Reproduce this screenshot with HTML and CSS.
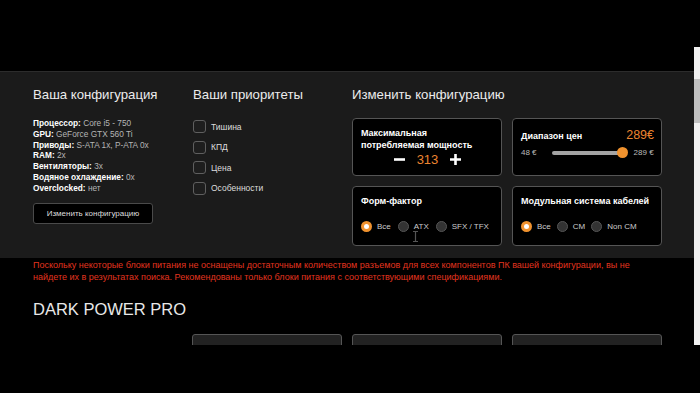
FILE: index.html
```html
<!DOCTYPE html>
<html lang="ru">
<head>
  <meta charset="UTF-8">
  <title>Блоки питания</title>
  <link rel="stylesheet" href="styles.css">
</head>
<body>
<div class="screen">
  <div class="letterbox-top"></div>

  <div class="viewport">
    <div class="page">
      <div class="site-header"></div>

      <section class="config-panel">
        <div class="col">
          <h2>Ваша конфигурация</h2>
          <ul class="spec-list">
            <li><b>Процессор:</b> Core i5 - 750</li>
            <li><b>GPU:</b> GeForce GTX 560 Ti</li>
            <li><b>Приводы:</b> S-ATA 1x, P-ATA 0x</li>
            <li><b>RAM:</b> 2x</li>
            <li><b>Вентиляторы:</b> 3x</li>
            <li><b>Водяное охлаждение:</b> 0x</li>
            <li><b>Overclocked:</b> нет</li>
          </ul>
          <button class="btn-change">Изменить конфигурацию</button>
        </div>

        <div class="col">
          <h2>Ваши приоритеты</h2>
          <ul class="check-list">
            <li><span class="check"></span>Тишина</li>
            <li><span class="check"></span>КПД</li>
            <li><span class="check"></span>Цена</li>
            <li><span class="check"></span>Особенности</li>
          </ul>
        </div>

        <div class="col">
          <h2>Изменить конфигурацию</h2>
          <div class="filter-grid">
            <div class="filter-card">
              <div class="filter-title">Максимальная<br>потребляемая мощность</div>
              <div class="stepper">
                <svg class="step-btn" width="11" height="11" viewBox="0 0 11 11"><path d="M0 5.5H11" stroke="#fff" stroke-width="2.6"/></svg>
                <span class="step-value">313</span>
                <svg class="step-btn" width="11" height="11" viewBox="0 0 11 11"><path d="M0 5.5H11M5.5 0V11" stroke="#fff" stroke-width="2.6"/></svg>
              </div>
            </div>

            <div class="filter-card">
              <div class="price-head">
                <span class="filter-title">Диапазон цен</span>
                <span class="price-value">289€</span>
              </div>
              <div class="range-row">
                <span>48 €</span>
                <div class="range-track"><span class="range-thumb"></span></div>
                <span>289 €</span>
              </div>
            </div>

            <div class="filter-card tall">
              <div class="filter-title">Форм-фактор</div>
              <div class="radio-row">
                <label><span class="radio on"></span>Все</label>
                <label><span class="radio"></span>ATX</label>
                <label><span class="radio"></span>SFX / TFX</label>
              </div>
            </div>

            <div class="filter-card tall">
              <div class="filter-title">Модульная система кабелей</div>
              <div class="radio-row tight">
                <label><span class="radio on"></span>Все</label>
                <label><span class="radio"></span>CM</label>
                <label><span class="radio"></span>Non CM</label>
              </div>
            </div>
          </div>
        </div>
      </section>

      <section class="results">
        <p class="warning">Поскольку некоторые блоки питания не оснащены достаточным количеством разъемов для всех компонентов ПК вашей конфигурации, вы не найдете их в результатах поиска. Рекомендованы только блоки питания с соответствующими спецификациями.</p>
        <h3>DARK POWER PRO</h3>
        <div class="product-row">
          <div class="product-pic">
            <svg width="30" height="4" viewBox="0 0 30 4"><path d="M2 4 Q15 -1 28 4" fill="none" stroke="#888" stroke-width="1.2"/></svg>
          </div>
          <div class="product-card"></div>
          <div class="product-card"></div>
          <div class="product-card"></div>
        </div>
      </section>
    </div>

    <div class="scrollbar"><span class="scroll-thumb"></span></div>
  </div>

  <div class="letterbox-bottom"></div>

  <svg class="cursor" width="7" height="11" viewBox="0 0 7 11"><path d="M1 0.5H6M3.5 0.5V10.5M1 10.5H6" stroke="#555" stroke-width="1.2" fill="none"/></svg>
</div>
</body>
</html>
```

FILE: styles.css
```css
body {
  margin: 0;
  background: #000;
  font-family: "Liberation Sans", Arial, sans-serif;
  color: #e6e6e6;
}

.screen {
  position: relative;
  width: 700px;
  height: 393px;
  overflow: hidden;
  background: #000;
}

.letterbox-top {
  height: 47px;
}

.letterbox-bottom {
  height: 48px;
}

.viewport {
  display: flex;
  height: 298px;
  overflow: hidden;
}

.page {
  flex: 1;
  background: #000;
}

.site-header {
  height: 24px;
}

/* панель конфигурации */
.config-panel {
  box-sizing: border-box;
  height: 187px;
  border-top: 1px solid #2c2c2c;
  background: #1b1b1b;
  padding: 14px 0 0 33px;
  display: grid;
  grid-template-columns: 160px 159px 320px;
}

.config-panel h2 {
  margin: 0;
  font-size: 13.2px;
  line-height: 17px;
  font-weight: normal;
  color: #ececec;
}

.spec-list {
  list-style: none;
  margin: 15px 0 0;
  padding: 0;
  font-size: 8.3px;
  line-height: 10.8px;
  color: #b5b5b5;
}

.spec-list b {
  color: #fff;
}

.btn-change {
  margin-top: 9px;
  width: 120px;
  height: 21px;
  background: #000;
  border: 1px solid #4a4a4a;
  border-radius: 3px;
  color: #ddd;
  font-family: inherit;
  font-size: 8px;
  padding: 0;
}

.check-list {
  list-style: none;
  margin: 17px 0 0;
  padding: 0;
  display: flex;
  flex-direction: column;
  gap: 7.6px;
  font-size: 8.5px;
  color: #ddd;
}

.check-list li {
  display: flex;
  align-items: center;
  gap: 5px;
  height: 13px;
}

.check {
  box-sizing: border-box;
  width: 13px;
  height: 13px;
  border: 1px solid #5f5f5f;
  border-radius: 3px;
  background: #1e1e1e;
}

.filter-grid {
  margin-top: 15px;
  display: grid;
  grid-template-columns: 150px 150px;
  grid-template-rows: 58px 60px;
  gap: 10px;
}

.filter-card {
  box-sizing: border-box;
  background: #000;
  border: 1px solid #555;
  border-radius: 4px;
  padding: 8px 7px 0 8px;
}

.filter-title {
  font-size: 9px;
  line-height: 12px;
  font-weight: bold;
  color: #fff;
}

.stepper {
  display: flex;
  justify-content: center;
  align-items: center;
  gap: 12px;
  height: 14px;
  margin-top: 1px;
}

.step-value {
  font-size: 13px;
  color: #ec8530;
}

.price-head {
  display: flex;
  justify-content: space-between;
  align-items: baseline;
  margin-top: 1px;
}

.price-value {
  font-size: 12.5px;
  color: #ec8530;
}

.range-row {
  display: flex;
  align-items: center;
  margin-top: 6px;
  font-size: 8px;
  color: #bbb;
}

.range-track {
  position: relative;
  width: 71px;
  height: 4px;
  margin: 0 11px 0 15px;
  border-radius: 2px;
  background: #a3a3a3;
}

.range-thumb {
  position: absolute;
  right: -5.5px;
  top: -3.5px;
  width: 11px;
  height: 11px;
  border-radius: 50%;
  background: #f0922e;
}

.radio-row {
  display: flex;
  align-items: center;
  gap: 7px;
  margin-top: 14px;
  font-size: 8px;
  color: #ccc;
  white-space: nowrap;
}

.radio-row.tight {
  gap: 6px;
}

.radio-row label {
  display: flex;
  align-items: center;
  gap: 5px;
  flex-shrink: 0;
}

.radio {
  box-sizing: border-box;
  flex-shrink: 0;
  width: 11px;
  height: 11px;
  border-radius: 50%;
  border: 1px solid #555;
  background: #333;
}

.radio.on {
  border: 3.5px solid #f0922e;
  background: #fff;
}

/* результаты */
.results {
  padding: 1px 0 0 33px;
}

.warning {
  margin: 0;
  width: 612px;
  font-size: 9px;
  line-height: 12px;
  color: #e3341f;
}

.results h3 {
  margin: 17px 0 0;
  font-size: 16.5px;
  line-height: 19px;
  font-weight: normal;
  color: #e8e8e8;
}

.product-row {
  display: grid;
  grid-template-columns: 149px 150px 150px 150px;
  gap: 10px;
  margin-top: 15px;
}

.product-pic {
  padding: 9px 0 0 75px;
}

.product-card {
  height: 40px;
  background: #222;
  border: 1px solid #555;
  border-radius: 3px 3px 0 0;
}

.scrollbar {
  width: 6px;
  background: #f1f1f1;
  padding-top: 32px;
}

.scroll-thumb {
  display: block;
  height: 44px;
  background: #c1c1c1;
}

.cursor {
  position: absolute;
  left: 412px;
  top: 231px;
}
```
